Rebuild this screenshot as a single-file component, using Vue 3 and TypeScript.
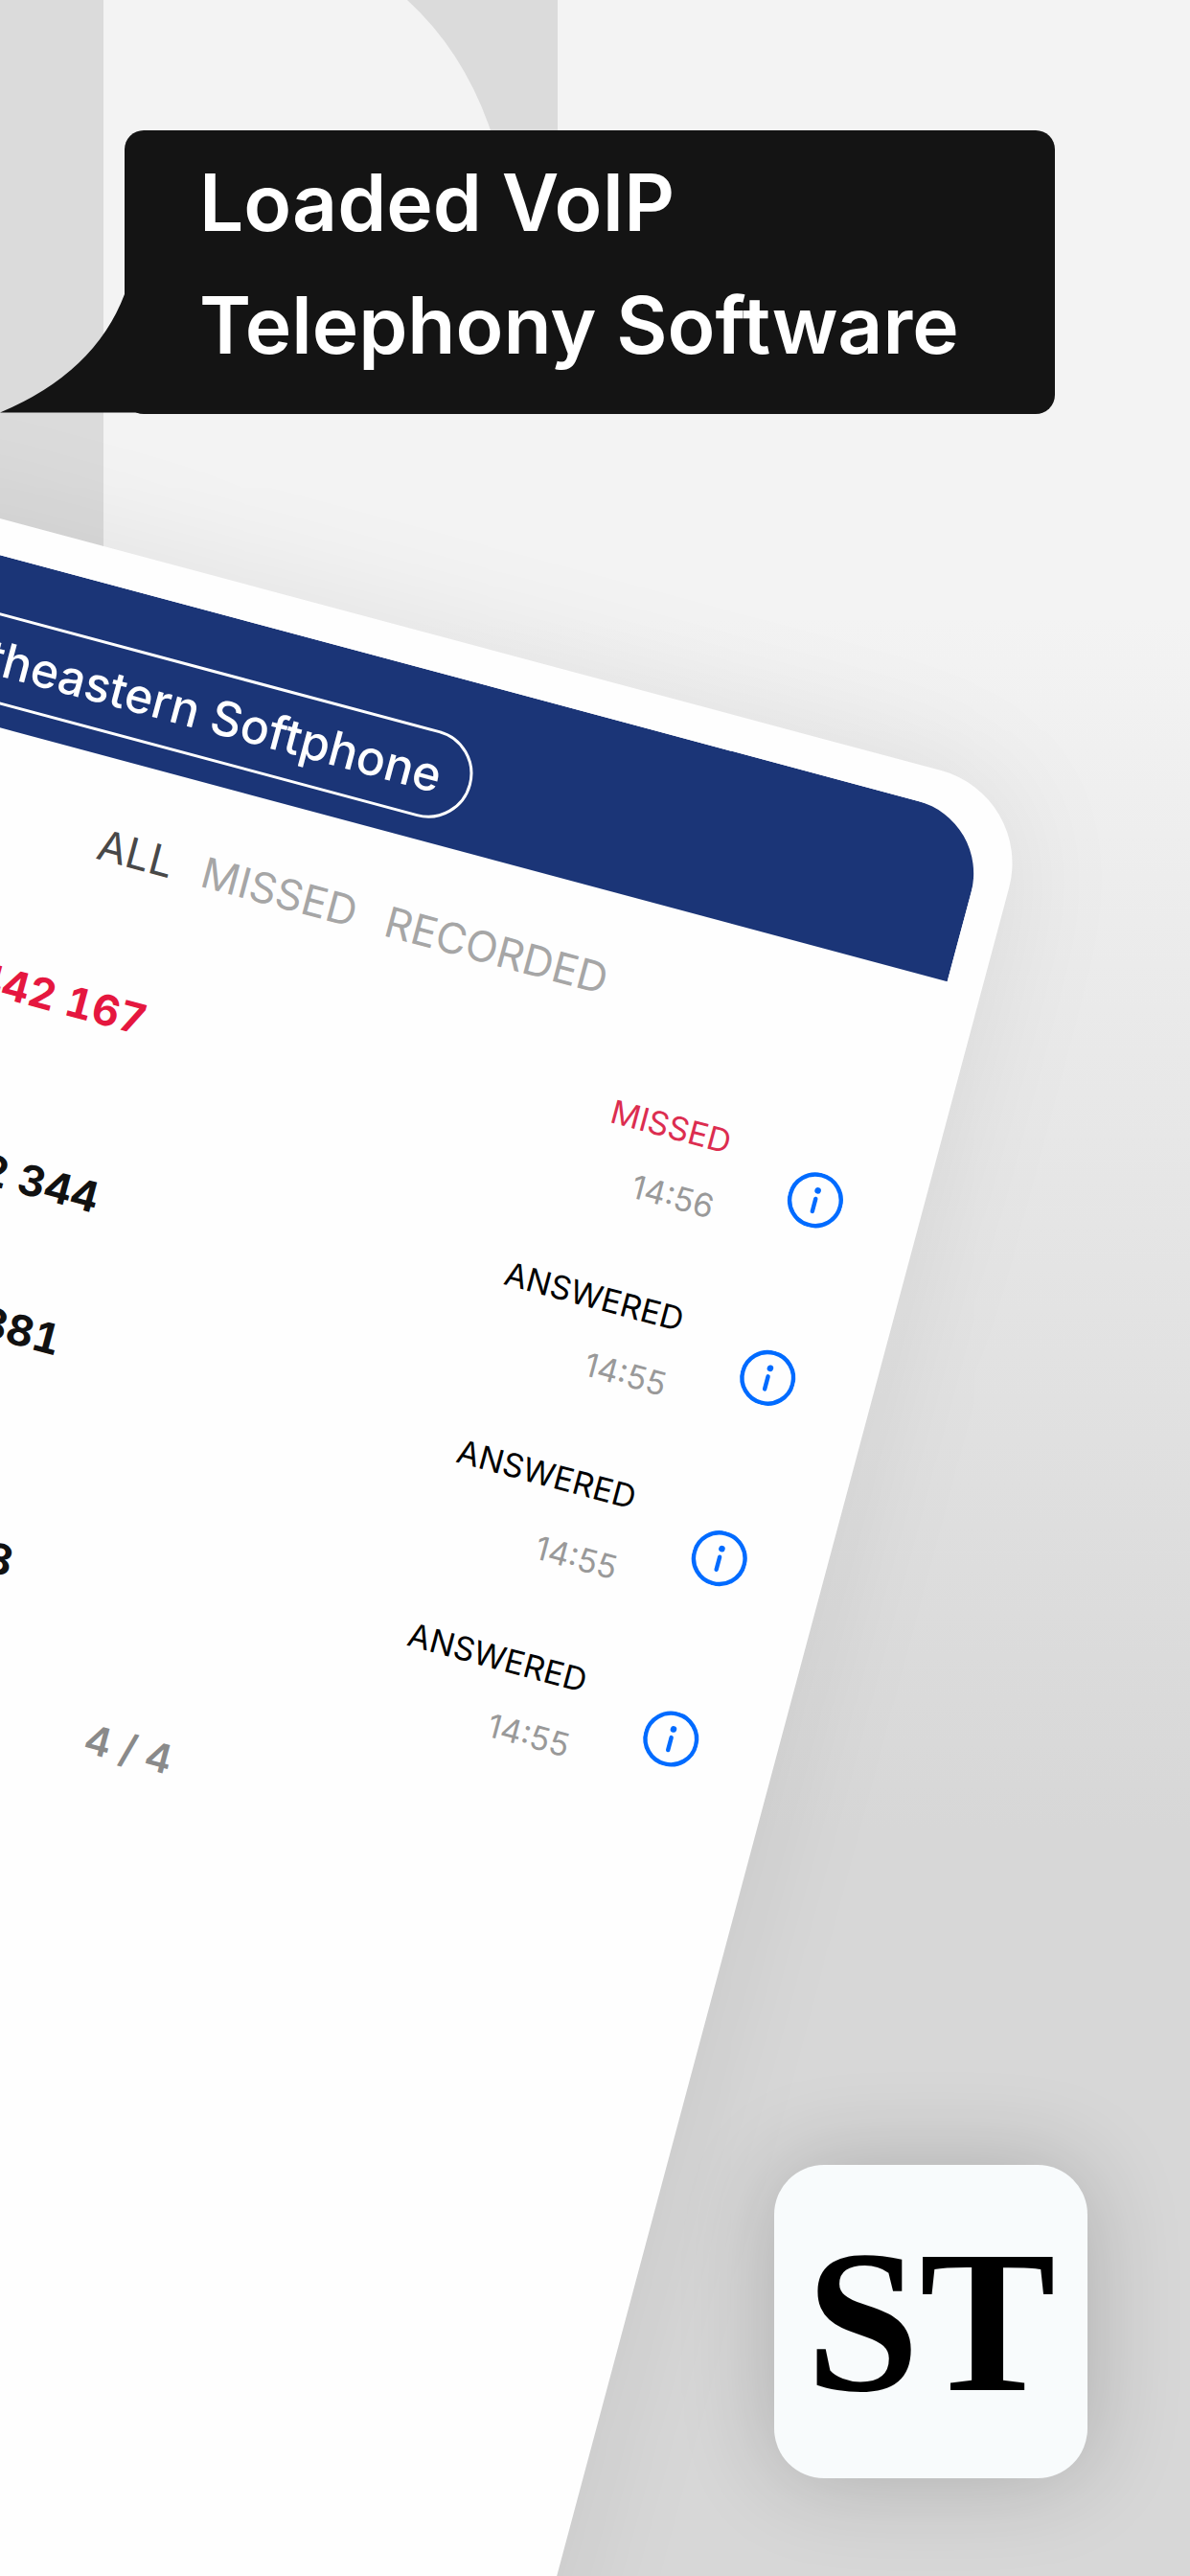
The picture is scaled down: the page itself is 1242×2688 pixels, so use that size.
<script setup lang="ts">
interface Call {
  contact: string
  status: string
  time: string
  missed?: boolean
  stacked?: boolean
}

const headline: string[] = ['Loaded VoIP', 'Telephony Software']
const tabs: string[] = ['ALL', 'MISSED', 'RECORDED']
const calls: Call[] = [
  { contact: '442 167', status: 'MISSED', time: '14:56', missed: true },
  { contact: '442 344', status: 'ANSWERED', time: '14:55' },
  { contact: '442 881', status: 'ANSWERED', time: '14:55', stacked: true },
  { contact: '44 23 88', status: 'ANSWERED', time: '14:55' },
]
</script>

<template>
  <main class="page">
    <svg class="backdrop" viewBox="0 0 582 620" width="582" height="620" aria-hidden="true">
      <rect width="108" height="620" fill="#dbdbdb" />
      <path d="M425 0Q484 54 512 136V150H582V0Z" fill="#dbdbdb" />
    </svg>

    <section class="phone">
      <div class="screen">
        <header class="bar">
          <span class="pill">Southeastern Softphone</span>
        </header>
        <nav class="tabs">
          <button
            v-for="(tab, i) in tabs"
            :key="tab"
            type="button"
            class="tab"
            :class="{ 'tab--active': i === 0 }"
          >{{ tab }}</button>
        </nav>
        <ul class="calls">
          <li v-for="call in calls" :key="call.contact" class="call" :class="{ 'call--missed': call.missed }">
            <span class="contact" :class="{ 'contact--stacked': call.stacked }">{{ call.contact }}</span>
            <span class="meta">
              <span class="status">{{ call.status }}</span>
              <time class="time">{{ call.time }}</time>
            </span>
            <button type="button" class="info" aria-label="Call details">
              <svg viewBox="0 0 58 58" width="58" height="58" aria-hidden="true">
                <circle cx="29" cy="29" r="26.8" fill="none" stroke="#006bff" stroke-width="4.4" />
                <circle cx="29" cy="18.6" r="3.3" fill="#006bff" />
                <path d="M29 27.5V41" stroke="#006bff" stroke-width="4.4" stroke-linecap="round" />
              </svg>
            </button>
          </li>
        </ul>
        <p class="count">4 / 4</p>
      </div>
    </section>

    <div class="bubble">
      <svg class="tail" viewBox="0 0 148 124" width="148" height="124" aria-hidden="true">
        <path d="M130 0Q99 82 0 123.5H148V0Z" fill="#141414" />
      </svg>
      <h1 class="headline">
        <span v-for="line in headline" :key="line" class="line">{{ line }}</span>
      </h1>
    </div>

    <div class="logo">ST</div>
  </main>
</template>

<style>
body {
  margin: 0;
}
</style>

<style scoped>
.page {
  position: relative;
  box-sizing: border-box;
  display: flex;
  flex-direction: column;
  min-height: 100vh;
  padding: 136px 107px 102px 130px;
  overflow: hidden;
  background: linear-gradient(#f3f3f3 0%, #f3f3f3 24%, #d7d7d7 71%, #d7d7d7 100%);
  font-family: Inter, "Liberation Sans", sans-serif;
}

.backdrop {
  position: absolute;
  top: 0;
  left: 0;
}

.bubble {
  position: relative;
  margin-right: 34px;
  padding: 12px 78px 28px;
  border-radius: 20px;
  background: #141414;
}

.tail {
  position: absolute;
  bottom: 1px;
  left: -130px;
}

.headline {
  display: flex;
  flex-direction: column;
  margin: 0;
  color: #fff;
  font-size: 82px;
  font-weight: 600;
  line-height: 128px;
  white-space: nowrap;
}

.phone {
  position: absolute;
  top: 830px;
  right: 163px;
  box-sizing: border-box;
  width: 1310px;
  min-height: 2300px;
  padding: 37px;
  border-radius: 100px;
  background: #fefefe;
  box-shadow: 0 0 130px rgba(0, 0, 0, 0.08);
  transform: rotate(15deg);
  transform-origin: top right;
}

.screen {
  display: flex;
  flex-direction: column;
  border-radius: 78px;
  overflow: hidden;
}

.bar {
  display: flex;
  justify-content: flex-end;
  padding: 58px 533px 23px 0;
  background: #1b3577;
}

.pill {
  padding: 0 30px;
  border: 3px solid #fff;
  border-radius: 47px;
  color: #fff;
  font-size: 50px;
  font-weight: 500;
  line-height: 87px;
  white-space: nowrap;
}

.tabs {
  display: flex;
  justify-content: center;
  gap: 32px;
  padding-top: 62px;
}

.tab {
  padding: 0;
  border: 0;
  background: none;
  color: #a6a6a6;
  font: 44px/56px Inter, "Liberation Sans", sans-serif;
}

.tab--active {
  color: #484848;
}

.calls {
  display: flex;
  flex-direction: column;
  gap: 82px;
  margin: 0;
  padding: 83px 45px 0 0;
  list-style: none;
}

.call {
  display: grid;
  grid-template-columns: 472px 1fr auto;
  align-items: center;
  color: #000;
}

.contact {
  padding-left: 256px;
  color: #111;
  font-size: 44px;
  font-weight: 700;
  font-variant-numeric: tabular-nums;
  line-height: 34px;
}

.contact--stacked {
  min-height: 116px;
}

.meta {
  display: flex;
  flex-direction: column;
  align-self: stretch;
  justify-content: space-between;
  align-items: flex-end;
  gap: 30px;
  padding-right: 72px;
  font-size: 34px;
  line-height: 40px;
}

.time {
  color: #999;
}

.call--missed .contact {
  color: #e5173f;
}

.call--missed .status {
  color: #dc2d50;
}

.info {
  display: flex;
  padding: 0;
  border: 0;
  background: none;
}

.count {
  margin: 74px 0 0;
  color: #8a8a8a;
  font-size: 42px;
  font-weight: 600;
  line-height: 56px;
  text-align: center;
}

.logo {
  position: relative;
  align-self: flex-end;
  width: 327px;
  margin-top: auto;
  border-radius: 52px;
  background: #f8fbfc;
  box-shadow: 0 0 100px rgba(0, 0, 0, 0.2);
  color: #000;
  font: bold 213px/327px "Liberation Serif", serif;
  text-align: center;
}
</style>
